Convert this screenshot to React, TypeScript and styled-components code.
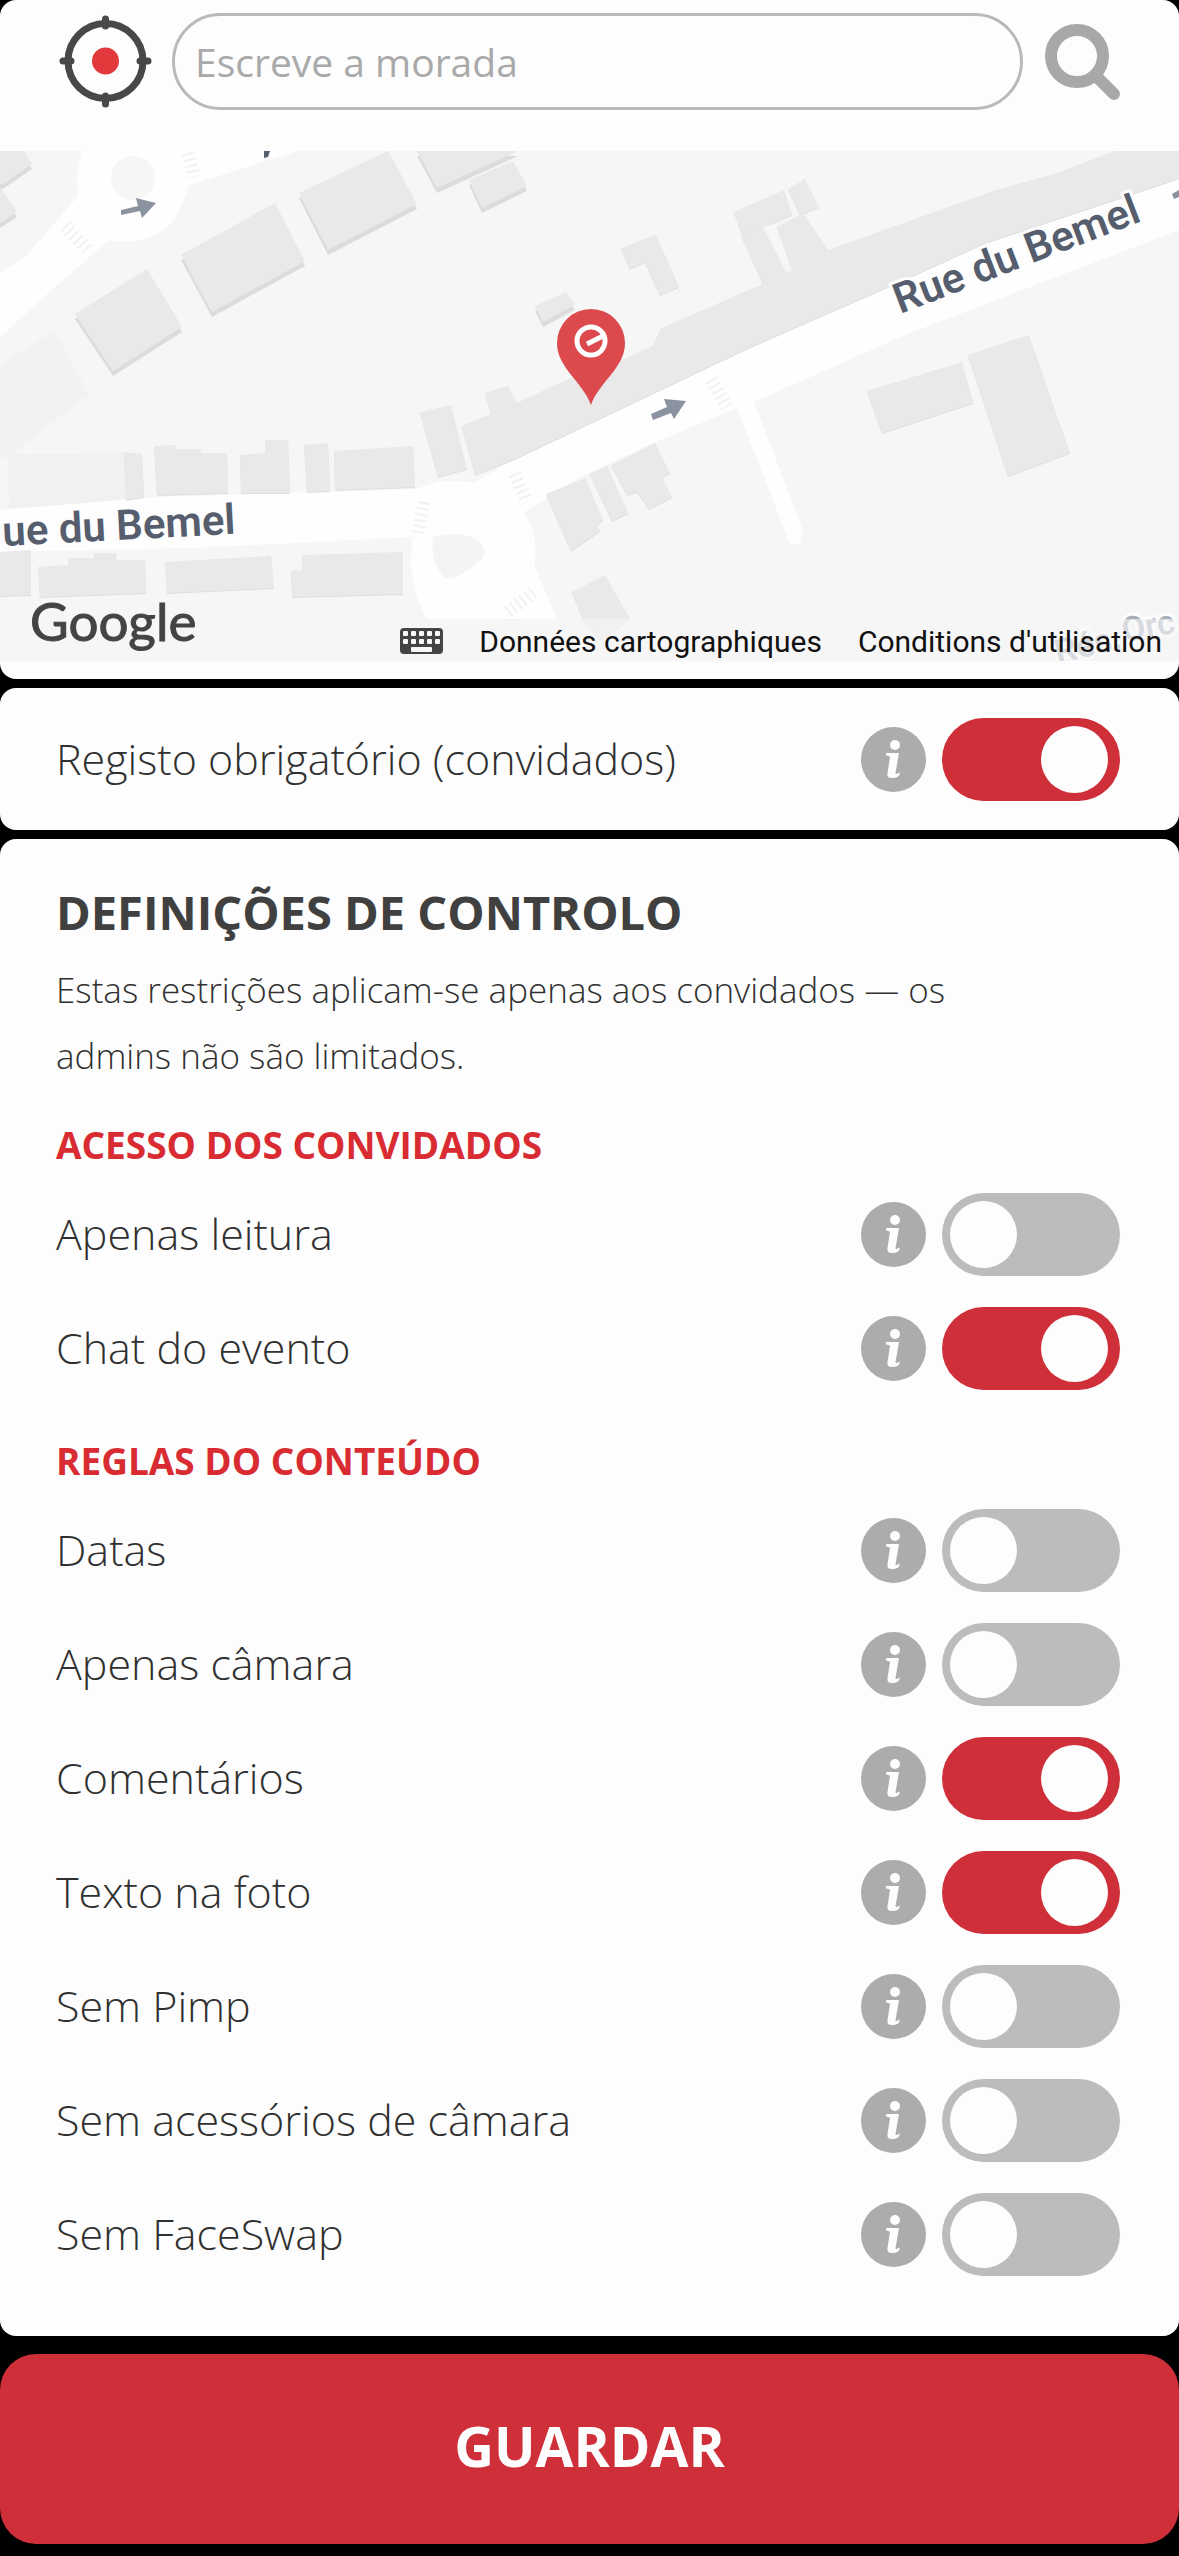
import React, { useState } from 'react';
import styled, { createGlobalStyle } from 'styled-components';

const GlobalStyle = createGlobalStyle`
  * {
    box-sizing: border-box;
  }

  body {
    margin: 0;
    background: #000;
    color: #404040;
    font-family: 'Open Sans', 'Noto Sans', sans-serif;
  }
`;

const Page = styled.main`
  display: flex;
  flex-direction: column;
  gap: 9px;
  padding-bottom: 12px;
`;

const Card = styled.section`
  background: #fdfdfd;
  border-radius: 16px;
  overflow: hidden;
`;

const LocationCard = styled(Card)`
  padding-bottom: 18px;
`;

const SearchBar = styled.form`
  display: flex;
  align-items: center;
  gap: 20px;
  height: 151px;
  padding: 0 59px 29px;
`;

const IconButton = styled.button`
  display: flex;
  flex-shrink: 0;
  padding: 0;
  border: none;
  background: none;
  cursor: pointer;
`;

const AddressInput = styled.input`
  flex: 1;
  min-width: 0;
  height: 97px;
  padding: 0 20px;
  border: 3px solid #b9b9b9;
  border-radius: 49px;
  outline: none;
  background: transparent;
  color: #444;
  font-family: inherit;
  font-size: 39px;

  &::placeholder {
    color: #a9a9a9;
    opacity: 1;
  }
`;

const MapArea = styled.div`
  position: relative;
  height: 510px;
  overflow: hidden;
`;

const MapDrawing = styled.svg`
  display: block;
  width: 100%;
  height: 100%;
`;

const MapLogo = styled.a`
  position: absolute;
  left: 30px;
  bottom: 8px;
  color: #444;
  font-family: Lato, sans-serif;
  font-size: 53px;
  line-height: 64px;
  text-decoration: none;
  -webkit-text-stroke: 1px #444;
`;

const MapFooter = styled.div`
  position: absolute;
  right: 0;
  bottom: 0;
  display: flex;
  gap: 2px;
  height: 42px;
`;

const MapFooterItem = styled.div`
  display: flex;
  align-items: center;
  padding: 2px 17px 0;
  background: rgba(247, 247, 247, 0.6);
  color: #111;
  font-family: Roboto, sans-serif;
  font-size: 30px;
  white-space: nowrap;

  a {
    color: inherit;
    text-decoration: none;
  }
`;

const SettingRow = styled.div`
  display: flex;
  align-items: center;
  gap: 16px;
  height: 114px;
`;

const SettingLabel = styled.label`
  flex: 1;
  color: #303030;
  font-size: 43px;
  font-weight: 300;
  line-height: 66px;
`;

const InfoButton = styled(IconButton)`
  border-radius: 50%;
`;

const Switch = styled.input`
  appearance: none;
  flex-shrink: 0;
  width: 178px;
  height: 83px;
  margin: 0;
  padding: 8px 12px 8px 8px;
  border-radius: 42px;
  background: #bdbcbd;
  cursor: pointer;

  &::before {
    content: '';
    display: block;
    width: 67px;
    height: 67px;
    border-radius: 50%;
    background: #fdfdfd;
  }

  &:checked {
    background: #cf2f38;
  }

  &:checked::before {
    margin-left: auto;
  }
`;

const RegistrationCard = styled(Card)`
  padding: 14px 59px 14px 56px;
`;

const ControlCard = styled(Card)`
  padding: 40px 59px 45px 56px;
`;

const Title = styled.h2`
  margin: 0 0 12px;
  font-size: 47px;
  font-weight: 700;
  line-height: 66px;
`;

const Description = styled.p`
  max-width: 960px;
  margin: 0;
  color: #303030;
  font-size: 35px;
  font-weight: 300;
  line-height: 66px;
`;

const GroupTitle = styled.h3`
  margin: 24px 0 0;
  color: #d92c32;
  font-size: 37px;
  font-weight: 700;
  line-height: 64px;
`;

const SaveButton = styled.button`
  height: 190px;
  margin-top: 9px;
  padding: 0 0 8px;
  border: none;
  border-radius: 36px;
  background: #cf2f38;
  color: #fdfdfd;
  font-family: inherit;
  font-size: 55px;
  font-weight: 700;
  cursor: pointer;
`;

const buildings = [
  '0,151 24,151 32,164 3,184 0,184',
  '0,187 17,212 0,223',
  '299,193 388,151 417,204 328,250',
  '181,255 275,203 305,261 212,312',
  '75,314 147,269 182,327 113,371',
  '417,151 518,151 437,188',
  '469,180 513,161 527,186 482,208',
  '535,306 566,292 575,305 543,322',
];

const lowBuildings = [
  '124,452 142,454 144,497 126,500',
  '154,446 176,445 176,449 201,449 201,453 227,453 228,493 157,495',
  '240,455 265,453 265,440 288,440 290,493 241,493',
  '304,445 328,443 330,491 307,492',
  '334,451 413,446 415,487 335,490',
  '420,412 451,405 467,469 438,477',
  '734,212 784,190 792,215 742,235',
  '788,189 805,179 819,207 800,215',
  '621,248 656,235 679,287 660,295 645,262 630,269',
  '165,562 271,556 274,588 167,593',
  '291,571 302,570 302,555 403,552 403,594 292,597',
  '38,567 68,565 68,558 94,558 94,553 116,553 117,560 145,560 146,593 40,597',
  '0,552 31,550 31,595 0,596',
  '546,494 585,478 603,520 597,525 600,531 571,551',
  '590,474 607,466 628,513 612,521',
  '611,465 655,443 670,473 662,477 672,497 649,509 637,492 627,495',
  '572,592 605,575 630,619 600,640 583,619',
  '867,391 962,362 973,403 882,433',
  '968,355 1029,335 1070,453 1008,476',
  '462,426 491,414 485,393 508,386 517,403 566,380 626,358 653,346 661,328 763,284 741,235 766,224 792,272 775,228 800,215 805,216 828,250 912,220 996,190 1057,173 1115,151 1179,151 1179,178 1153,187 985,243 897,283 744,350 580,428 517,458 475,475',
];

const crossings = [
  'M188 153 L194 177',
  'M65 226 L88 250',
  'M424 502 L418 533',
  'M515 474 L527 502',
  'M508 612 L534 592',
  'M711 380 L727 407',
];

interface SettingProps {
  id: string;
  label: string;
  initial?: boolean;
}

const TargetIcon = () => (
  <svg width="93" height="93" viewBox="0 0 93 93" fill="none" aria-hidden="true">
    <circle cx="46.5" cy="46" r="37.5" stroke="#484848" strokeWidth="7" />
    <path
      d="M46.5 4 V11 M46.5 81 V89 M4 46 H12 M81 46 H89"
      stroke="#484848"
      strokeWidth="7"
      strokeLinecap="round"
    />
    <circle cx="46.5" cy="46" r="13.5" fill="#e23a3c" />
  </svg>
);

const SearchIcon = () => (
  <svg width="77" height="77" viewBox="0 0 77 77" fill="none" aria-hidden="true">
    <circle cx="34" cy="33" r="26" stroke="#a9a8a9" strokeWidth="12" />
    <path d="M54 54 L71 71" stroke="#a9a8a9" strokeWidth="12" strokeLinecap="round" />
  </svg>
);

const InfoIcon = () => (
  <svg width="65" height="65" viewBox="0 0 65 65" aria-hidden="true">
    <circle cx="32.5" cy="32.5" r="32.5" fill="#adacad" />
    <circle cx="34" cy="18" r="5" fill="#fdfdfd" />
    <path
      d="M25 26 H38 L34.500 46 Q34.500 48 39 45.500 Q38.500 51 31 51 Q25.500 51 26.500 46 L29 30 Q28 28.500 25 28.500 Z"
      fill="#fdfdfd"
    />
  </svg>
);

const KeyboardIcon = () => (
  <svg width="43" height="26" viewBox="0 0 43 26" fill="#f7f7f7" aria-hidden="true">
    <rect width="43" height="26" rx="4" fill="#444" />
    {[3, 11, 19, 27, 35].map((x) => (
      <React.Fragment key={x}>
        <rect x={x} y="3" width="5" height="5" rx="1" />
        <rect x={x} y="11" width="5" height="5" rx="1" />
      </React.Fragment>
    ))}
    <rect x="11" y="19" width="21" height="5" rx="1" />
  </svg>
);

const StreetMap = () => (
  <MapDrawing viewBox="0 151 1179 510" preserveAspectRatio="xMidYMid slice" role="img" aria-label="Mapa">
    <rect y="151" width="1179" height="510" fill="#f6f6f6" />
    <polygon points="0,365 52,332 60,340 89,395 12,453 0,460" fill="#f2f2f2" />
    <polygon points="8,455 124,452 126,503 9,508" fill="#f1f1f1" />

    <g fill="#fefefe">
      <path d="M82 151 Q74 175 78 196 L25 257 L0 273 V337 L45 296 L108 241 Q160 246 178 213 L190 185 L240 169 L298 151 Z" />
      <path d="M0 510 L157 497 L415 489 L440 481 L475 482 L517 458 L580 428 L744 350 L897 283 L985 243 L1179 178 V230 L905 335 L754 402 L803 530 L800 544 H790 L737 408 L656 442 L580 477 L524 512 Q540 540 534 565 L557 619 H427 Q405 580 413 537 L191 548 L0 552 Z" />
    </g>
    <circle cx="133" cy="178" r="22" fill="#f6f6f6" />
    <path d="M433 537 Q458 530 478 540 Q488 550 482 559 L462 574 Q450 583 442 575 Q430 560 433 537 Z" fill="#f4f4f4" />

    {crossings.map((d) => (
      <path key={d} d={d} stroke="#f1f1f1" strokeWidth="13" strokeDasharray="2 4" />
    ))}

    <g fill="#dcdcdc">
      {buildings.map((points) => (
        <polygon key={points} points={points} transform="translate(0 5)" />
      ))}
    </g>
    <g fill="#dedede">
      {lowBuildings.map((points) => (
        <polygon key={points} points={points} transform="translate(0 1)" />
      ))}
    </g>
    <g fill="#e9e9e9">
      {[...buildings, ...lowBuildings].map((points) => (
        <polygon key={points} points={points} />
      ))}
    </g>
    <polygon points="763,227 775,223 792,271 786,272" fill="#f6f6f6" />

    <g fill="#8b92a0">
      <path d="M121 210 L138 206 L136 198 L156 203 L142 218 L140 211 L121 215 Z" />
      <path d="M651 414 L667 407 L664 399 L686 401 L674 419 L671 413 L653 420 Z" />
      <path d="M1172 194 L1179 190 V197 L1174 199 Z" />
    </g>
    <path d="M264 151 H270 L268 157 L264 158 Z" fill="#56606f" />

    <g
      fill="#565e6e"
      fontFamily="Roboto, sans-serif"
      fontWeight="600"
      fontSize="42"
      stroke="#fdfdfd"
      strokeWidth="6"
      paintOrder="stroke"
    >
      <text transform="translate(900 314) rotate(-21)">Rue du Bemel</text>
      <text transform="translate(3 546) rotate(-3)">ue du Bemel</text>
      <g fill="#a9afba" fontSize="34">
        <text transform="translate(1124 642) rotate(-10)">Orc</text>
        <text transform="translate(1058 664) rotate(-14)">Rés.</text>
      </g>
    </g>

    <path d="M591 405 C583 382 557 368 557 343 A34 34 0 0 1 625 343 C625 368 599 382 591 405 Z" fill="#dc4a4e" />
    <circle cx="591" cy="341" r="14" fill="none" stroke="#fff" strokeWidth="5" />
    <path d="M587 344 L603 336" stroke="#fff" strokeWidth="5" />
  </MapDrawing>
);

const Setting: React.FC<SettingProps> = ({ id, label, initial = false }) => {
  const [checked, setChecked] = useState(initial);

  return (
    <SettingRow>
      <SettingLabel htmlFor={id}>{label}</SettingLabel>
      <InfoButton type="button" aria-label={`Informação: ${label}`}>
        <InfoIcon />
      </InfoButton>
      <Switch
        id={id}
        type="checkbox"
        role="switch"
        checked={checked}
        onChange={(e) => setChecked(e.target.checked)}
      />
    </SettingRow>
  );
};

const accessSettings: SettingProps[] = [
  { id: 'read-only', label: 'Apenas leitura' },
  { id: 'chat', label: 'Chat do evento', initial: true },
];

const contentSettings: SettingProps[] = [
  { id: 'dates', label: 'Datas' },
  { id: 'camera-only', label: 'Apenas câmara' },
  { id: 'comments', label: 'Comentários', initial: true },
  { id: 'photo-text', label: 'Texto na foto', initial: true },
  { id: 'no-pimp', label: 'Sem Pimp' },
  { id: 'no-props', label: 'Sem acessórios de câmara' },
  { id: 'no-faceswap', label: 'Sem FaceSwap' },
];

const App: React.FC = () => {
  return (
    <Page>
      <GlobalStyle />

      <LocationCard>
        <SearchBar onSubmit={(e) => e.preventDefault()}>
          <IconButton type="button" aria-label="A minha localização">
            <TargetIcon />
          </IconButton>
          <AddressInput type="text" placeholder="Escreve a morada" aria-label="Escreve a morada" />
          <IconButton type="submit" aria-label="Procurar">
            <SearchIcon />
          </IconButton>
        </SearchBar>

        <MapArea>
          <StreetMap />
          <MapLogo href="#google">Google</MapLogo>
          <MapFooter>
            <MapFooterItem>
              <IconButton type="button" aria-label="Atalhos de teclado">
                <KeyboardIcon />
              </IconButton>
            </MapFooterItem>
            <MapFooterItem>Données cartographiques</MapFooterItem>
            <MapFooterItem>
              <a href="#terms">Conditions d'utilisation</a>
            </MapFooterItem>
          </MapFooter>
        </MapArea>
      </LocationCard>

      <RegistrationCard>
        <Setting id="registration" label="Registo obrigatório (convidados)" initial />
      </RegistrationCard>

      <ControlCard>
        <Title>DEFINIÇÕES DE CONTROLO</Title>
        <Description>
          Estas restrições aplicam-se apenas aos convidados — os admins não são limitados.
        </Description>

        <GroupTitle>ACESSO DOS CONVIDADOS</GroupTitle>
        {accessSettings.map((setting) => (
          <Setting key={setting.id} {...setting} />
        ))}

        <GroupTitle>REGLAS DO CONTEÚDO</GroupTitle>
        {contentSettings.map((setting) => (
          <Setting key={setting.id} {...setting} />
        ))}
      </ControlCard>

      <SaveButton type="button">GUARDAR</SaveButton>
    </Page>
  );
};

export default App;
